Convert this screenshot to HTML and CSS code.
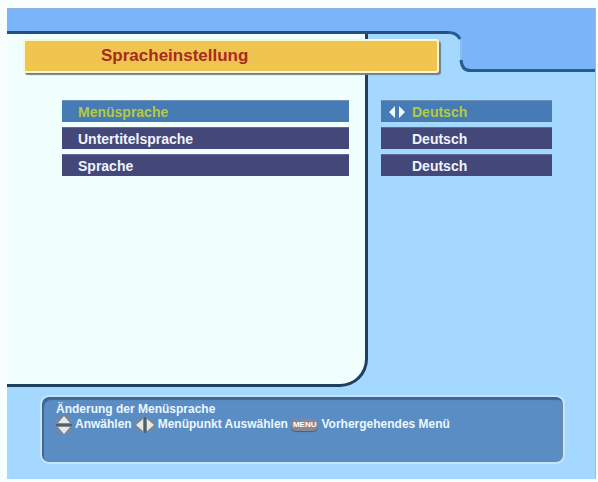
FILE: index.html
```html
<!DOCTYPE html>
<html lang="de">
<head>
    <meta charset="UTF-8" />
    <meta name="viewport" content="width=device-width, initial-scale=1.0"/>
    <title>Spracheinstellung</title>
    <link rel="stylesheet" href="styles.css">
</head>
<body>
<div class="screen">
    <div class="header">
        <div class="header-low"></div>
        <svg class="header-curve" width="30" height="64" viewBox="0 0 30 64">
            <path class="curve-fill" d="M0 0H30V62H23Q13 62 13 50V38Q13 25 0 25Z" />
            <path class="curve-top" d="M0 0.5H30" />
            <path class="curve-shade" d="M13 32V52" />
            <path class="curve-line" d="M0 24.5Q9 24.5 12 31" />
            <path class="curve-line" d="M13 52Q14 62.5 22 62.5H30" />
        </svg>
        <div class="header-high"></div>
    </div>

    <main class="main">
        <div class="panel"></div>
        <h1 class="title">Spracheinstellung</h1>
        <form class="settings">
            <label class="bar active" for="menu-lang">Menüsprache</label>
            <div class="bar value active">
                <svg class="arrows" width="18" height="12" viewBox="0 0 18 12">
                    <path d="M7 0V12L1 6ZM11 0V12L17 6Z" />
                </svg>
                <select id="menu-lang"><option>Deutsch</option></select>
            </div>
            <label class="bar" for="subtitle-lang">Untertitelsprache</label>
            <div class="bar value">
                <select id="subtitle-lang"><option>Deutsch</option></select>
            </div>
            <label class="bar" for="audio-lang">Sprache</label>
            <div class="bar value">
                <select id="audio-lang"><option>Deutsch</option></select>
            </div>
        </form>
    </main>

    <footer class="help">
        <div>Änderung der Menüsprache</div>
        <div class="keys">
            <svg width="16" height="20" viewBox="0 0 16 20">
                <rect class="key-back" x="0" y="1" width="16" height="18" rx="6" />
                <path class="key-front" d="M8 1L14 8H2ZM8 19L14 12H2Z" />
                <path class="key-split" d="M0 10H16" />
            </svg>
            <span>Anwählen</span>
            <svg width="20" height="16" viewBox="0 0 20 16">
                <rect class="key-back" x="0" y="1" width="20" height="14" rx="6" />
                <path class="key-front" d="M8 2V14L1 8ZM12 2V14L19 8Z" />
                <path class="key-split" d="M10 0V16" />
            </svg>
            <span>Menüpunkt Auswählen</span>
            <span class="menu-key">MENU</span>
            <span>Vorhergehendes Menü</span>
        </div>
    </footer>
</div>
</body>
</html>
```

FILE: styles.css
```css
* {
    box-sizing: border-box;
}

body {
    margin: 0;
    padding: 8px 2px 3px 7px;
    min-height: 100vh;
    display: flex;
    background: #f8fefd;
    font-family: "Liberation Sans", Arial, sans-serif;
    font-weight: bold;
}

.screen {
    flex: 1;
    display: grid;
    grid-template-rows: 1fr auto;
    grid-template-columns: 100%;
    background: #a5d8ff;
    border-right: 1px solid #a3b9cf;
}

/* header and main share the first cell, the title sits under the step */
.header,
.main {
    grid-area: 1 / 1;
}

.header {
    display: flex;
    align-items: flex-start;
}

.header-low {
    width: 75%;
    height: 26px;
    background: #7ab5fa;
    border-top: 1px solid #8fb2dc;
    border-bottom: 3px solid #265080;
}

.header-curve {
    flex: none;
}

.header-high {
    flex: 1;
    height: 64px;
    background: #7ab5fa;
    border-top: 1px solid #8fb2dc;
    border-bottom: 3px solid #265b94;
}

.curve-fill {
    fill: #7ab5fa;
}

.curve-top {
    stroke: #8fb2dc;
}

.curve-line {
    fill: none;
    stroke: #265b94;
    stroke-width: 3;
}

.curve-shade {
    fill: none;
    stroke: #8dbdee;
    stroke-width: 2;
}

.main {
    margin-top: 26px;
    display: grid;
    grid-template-columns: 62% 1fr;
    grid-template-rows: auto 1fr;
}

.panel {
    grid-area: 1 / 1 / 3 / 2;
    margin-right: 4px;
    background: #f0fffe;
    border-right: 3px solid #1d405f;
    border-bottom: 3px solid #1d405f;
    border-bottom-right-radius: 28px;
}

.title {
    grid-area: 1 / 1 / 2 / 3;
    margin: 5px 156px 0 16px;
    padding: 0 0 0 76px;
    font-size: 17px;
    line-height: 30px;
    color: #a92a22;
    background: #efc44f;
    border: 2px solid #fbf5d2;
    border-radius: 3px;
    box-shadow: 2px 2px 1px #71808a;
}

.settings {
    grid-area: 2 / 1 / 3 / 3;
    align-self: start;
    display: grid;
    grid-template-columns: 287fr 171fr;
    gap: 5px 32px;
    padding: 27px 43px 0 55px;
}

.bar {
    height: 22px;
    padding-left: 16px;
    font-size: 14px;
    line-height: 22px;
    color: #f0f3ff;
    background: #434879;
    border-top: 1px solid #62699a;
}

.value {
    display: flex;
    align-items: center;
    padding-left: 31px;
}

.active {
    color: #b4ca40;
    background: #467bb5;
    border-top-color: #6f93b8;
}

.value select {
    flex: 1;
    padding: 0;
    border: none;
    background: none;
    color: inherit;
    font: inherit;
    appearance: none;
}

.arrows {
    margin-left: -24px;
    margin-right: 6px;
    fill: #eefaff;
}

.help {
    min-height: 69px;
    margin: 8px 30px 15px 33px;
    padding: 5px 14px;
    font-size: 12px;
    line-height: 15px;
    color: #eaf7ff;
    background: #5b8dc5;
    border: 2px solid #c3e6fb;
    border-radius: 9px;
    box-shadow: inset 2px 3px 1px #3f668f, inset -2px 0 1px #6e89a8;
}

.keys {
    display: flex;
    align-items: center;
    gap: 3px;
    height: 15px;
}

.keys svg {
    flex: none;
}

.key-back {
    fill: #75889a;
}

.key-front {
    fill: #e8e9e6;
}

.key-split {
    stroke: #515f6c;
    stroke-width: 2;
}

.menu-key {
    padding: 0 2px;
    font-size: 8px;
    line-height: 12px;
    color: #fff;
    background: #8b8790;
    border-radius: 5px;
    box-shadow: 0 1px 1px #4a5d74;
}
```
